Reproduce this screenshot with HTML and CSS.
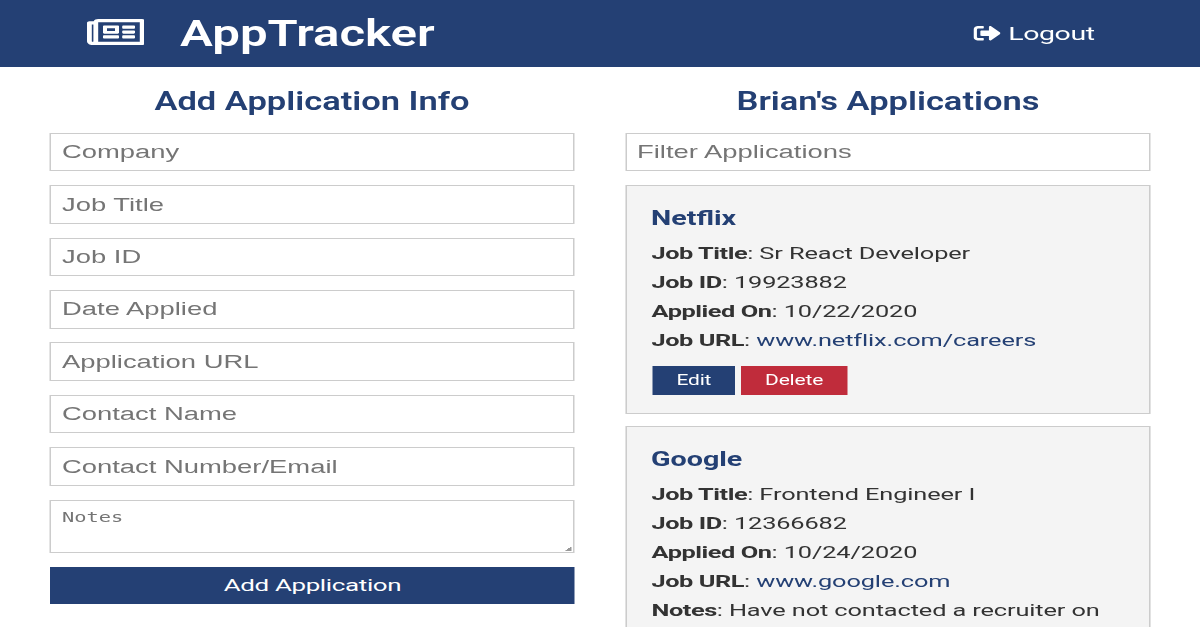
FILE: index.html
```html
<!DOCTYPE html>
<html lang="en">
<head>
<meta charset="utf-8">
<title>AppTracker</title>
<link rel="stylesheet" href="styles.css">
</head>
<body>
<div class="page">
  <header class="navbar">
    <div class="brand">
      <svg class="brand-icon" viewBox="0 64 576 384" preserveAspectRatio="none"><path fill="currentColor" d="M552 64H112c-20.858 0-38.643 13.377-45.248 32H24c-13.255 0-24 10.745-24 24v272c0 30.928 25.072 56 56 56h496c13.255 0 24-10.745 24-24V88c0-13.255-10.745-24-24-24zM48 392V144h16v248c0 4.411-3.589 8-8 8s-8-3.589-8-8zm480 8H111.422c.374-2.614.578-5.283.578-8V112h416v288zM172 280h136c6.627 0 12-5.373 12-12v-96c0-6.627-5.373-12-12-12H172c-6.627 0-12 5.373-12 12v96c0 6.627 5.373 12 12 12zm28-80h80v40h-80v-40zm-40 140v-24c0-6.627 5.373-12 12-12h136c6.627 0 12 5.373 12 12v24c0 6.627-5.373 12-12 12H172c-6.627 0-12-5.373-12-12zm192 0v-24c0-6.627 5.373-12 12-12h104c6.627 0 12 5.373 12 12v24c0 6.627-5.373 12-12 12H364c-6.627 0-12-5.373-12-12zm0-144v-24c0-6.627 5.373-12 12-12h104c6.627 0 12 5.373 12 12v24c0 6.627-5.373 12-12 12H364c-6.627 0-12-5.373-12-12zm0 72v-24c0-6.627 5.373-12 12-12h104c6.627 0 12 5.373 12 12v24c0 6.627-5.373 12-12 12H364c-6.627 0-12-5.373-12-12z"/></svg>
      <h1 class="brand-name">AppTracker</h1>
    </div>
    <a class="logout">
      <svg class="logout-icon" viewBox="0 64 504 384" preserveAspectRatio="none"><path fill="currentColor" d="M497 273L329 441c-15 15-41 4.500-41-17v-96H152c-13.300 0-24-10.700-24-24v-96c0-13.300 10.700-24 24-24h136V88c0-21.400 25.900-32 41-17l168 168c9.300 9.400 9.300 24.600 0 34zM192 436v-40c0-6.600-5.400-12-12-12H96c-17.700 0-32-14.300-32-32V160c0-17.700 14.300-32 32-32h84c6.600 0 12-5.400 12-12V76c0-6.600-5.400-12-12-12H96c-53 0-96 43-96 96v192c0 53 43 96 96 96h84c6.600 0 12-5.400 12-12z"/></svg>
      <span>Logout</span>
    </a>
  </header>
  <main class="columns">
    <section class="column">
      <h2 class="title">Add Application Info</h2>
      <form class="form">
        <input class="field" type="text" placeholder="Company">
        <input class="field" type="text" placeholder="Job Title">
        <input class="field" type="text" placeholder="Job ID">
        <input class="field" type="text" placeholder="Date Applied">
        <input class="field" type="text" placeholder="Application URL">
        <input class="field" type="text" placeholder="Contact Name">
        <input class="field" type="text" placeholder="Contact Number/Email">
        <textarea class="field notes" placeholder="Notes"></textarea>
        <button class="submit" type="button">Add Application</button>
      </form>
    </section>
    <section class="column">
      <h2 class="title">Brian's Applications</h2>
      <input class="field" type="text" placeholder="Filter Applications">
      <article class="card">
        <h3 class="company">Netflix</h3>
        <p class="row"><strong>Job Title</strong>: Sr React Developer</p>
        <p class="row"><strong>Job ID</strong>: 19923882</p>
        <p class="row"><strong>Applied On</strong>: 10/22/2020</p>
        <p class="row"><strong>Job URL</strong>: <a class="link">www.netflix.com/careers</a></p>
        <div class="actions">
          <button class="btn edit" type="button">Edit</button>
          <button class="btn delete" type="button">Delete</button>
        </div>
      </article>
      <article class="card">
        <h3 class="company">Google</h3>
        <p class="row"><strong>Job Title</strong>: Frontend Engineer I</p>
        <p class="row"><strong>Job ID</strong>: 12366682</p>
        <p class="row"><strong>Applied On</strong>: 10/24/2020</p>
        <p class="row"><strong>Job URL</strong>: <a class="link">www.google.com</a></p>
        <p class="row"><strong>Notes</strong>: Have not contacted a recruiter on</p>
      </article>
    </section>
  </main>
</div>
</body>
</html>
```
FILE: styles.css
```css
* { box-sizing: border-box; margin: 0; padding: 0; }
html, body { height: 627px; overflow: hidden; background: #fff; }
body { font-family: Roboto, sans-serif; color: #333; }

/* 800px layout stretched to the full window width */
.page {
  width: 800px;
  height: 627px;
  overflow: hidden;
  transform: scaleX(1.5);
  transform-origin: 0 0;
}

.navbar {
  display: flex;
  justify-content: space-between;
  align-items: center;
  height: 67.4px;
  padding: 0 70.3px 3.4px 57.8px;
  background: #244074;
  color: #fff;
}
.brand { display: flex; align-items: center; gap: 24px; }
.brand-icon { width: 38.4px; height: 26px; }
.brand-name {
  padding-top: 3px;
  font-size: 36px;
  font-weight: 600;
  line-height: 42px;
  transform: scaleX(0.911);
  transform-origin: 0 50%;
}
.logout { display: flex; align-items: center; gap: 5px; padding-top: 2.6px; font-size: 19px; letter-spacing: -0.3px; }
.logout-icon { width: 18px; height: 14.5px; }

.columns {
  display: grid;
  grid-template-columns: 350px 350px;
  gap: 33.33px;
  padding: 0 33.33px;
}
.title {
  height: 65.4px;
  padding-top: 20px;
  font-size: 25px;
  font-weight: 600;
  line-height: 30px;
  text-align: center;
  color: #244074;
  transform: scaleX(0.92);
}
.form { display: flex; flex-direction: column; }
.field {
  display: block;
  width: 100%;
  height: 38.6px;
  margin-bottom: 13.84px;
  padding: 0 7px;
  border: 1px solid #ccc;
  background: #fff;
  font-family: "Liberation Sans", Arial, sans-serif;
  font-size: 18.27px;
}
.field::placeholder { color: #757575; }
.notes {
  height: 53px;
  padding-top: 8.2px;
  font-family: "DejaVu Sans Mono", monospace;
  font-size: 13.6px;
  resize: none;
  background: linear-gradient(135deg, transparent 50%, #999 50%) right 1px bottom 1px / 4px 5px no-repeat #fff;
}
.submit {
  height: 37.7px;
  border: 0;
  background: #244074;
  color: #fff;
  font-family: Roboto, sans-serif;
  font-size: 17.3px;
  letter-spacing: -0.23px;
}

.card {
  height: 228.6px;
  margin-bottom: 12.2px;
  padding: 16.7px 16.7px 0;
  border: 1px solid #ccc;
  background: #f4f4f4;
}
.company {
  margin-bottom: 5.1px;
  font-size: 21px;
  font-weight: 700;
  line-height: 31px;
  color: #244074;
  transform: scaleX(0.91);
  transform-origin: 0 50%;
}
.row { font-size: 16.9px; line-height: 29.1px; letter-spacing: -0.08px; white-space: nowrap; }
.row strong { letter-spacing: -0.3px; }
.link { color: #244074; }
.actions { display: flex; gap: 3.4px; margin: 10.2px 0 0 0.4px; }
.btn { height: 29.7px; border: 0; color: #fff; font-family: Roboto, sans-serif; font-size: 14px; letter-spacing: -0.13px; }
.edit { width: 55.7px; background: #244074; }
.delete { width: 71.2px; background: #c02c3b; }
```
